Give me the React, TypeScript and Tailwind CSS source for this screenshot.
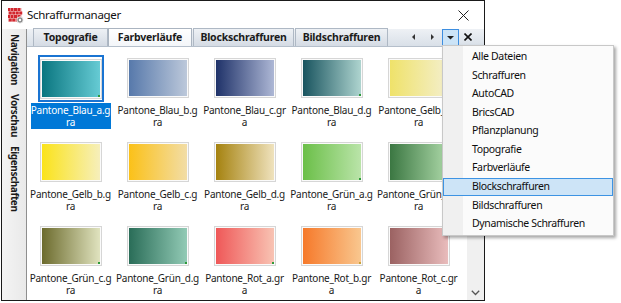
import React from "react";

type Item = { c1: string; c2: string; l1: string; l2: string; sel?: boolean; dot?: string };

const items: Item[] = [
  { c1: "#0a7680", c2: "#66cbd4", l1: "Pantone_Blau_a.g", l2: "ra", sel: true, dot: "#2e9a3a" },
  { c1: "#5779ab", c2: "#bcc8da", l1: "Pantone_Blau_b.g", l2: "ra" },
  { c1: "#1f3269", c2: "#adb7d5", l1: "Pantone_Blau_c.gr", l2: "a" },
  { c1: "#19545f", c2: "#aed4cf", l1: "Pantone_Blau_d.g", l2: "ra", dot: "#2e9a3a" },
  { c1: "#efe26a", c2: "#f4efcc", l1: "Pantone_Gelb_a.g", l2: "ra" },
  { c1: "#fbe31a", c2: "#f6efbb", l1: "Pantone_Gelb_b.g", l2: "ra" },
  { c1: "#fbc118", c2: "#f2dda6", l1: "Pantone_Gelb_c.g", l2: "ra" },
  { c1: "#a5820f", c2: "#efe2bd", l1: "Pantone_Gelb_d.g", l2: "ra" },
  { c1: "#6bbf48", c2: "#bae4a9", l1: "Pantone_Grün_a.g", l2: "ra", dot: "#2e9a3a" },
  { c1: "#3b7742", c2: "#acd8a8", l1: "Pantone_Grün_b.g", l2: "ra" },
  { c1: "#6c6b2d", c2: "#e0e3bf", l1: "Pantone_Grün_c.g", l2: "ra", dot: "#2e9a3a" },
  { c1: "#2a6d58", c2: "#92cab5", l1: "Pantone_Grün_d.g", l2: "ra", dot: "#2e9a3a" },
  { c1: "#ef5858", c2: "#f8c3b3", l1: "Pantone_Rot_a.gr", l2: "a", dot: "#2e9a3a" },
  { c1: "#f6792a", c2: "#f9c78f", l1: "Pantone_Rot_b.gr", l2: "a", dot: "#c9a23a" },
  { c1: "#9b6262", c2: "#e9bcbc", l1: "Pantone_Rot_c.gr", l2: "a" },
];

const menu = [
  "Alle Dateien",
  "Schraffuren",
  "AutoCAD",
  "BricsCAD",
  "Pflanzplanung",
  "Topografie",
  "Farbverläufe",
  "Blockschraffuren",
  "Bildschraffuren",
  "Dynamische Schraffuren",
];

function AppIcon() {
  const cells: React.ReactElement[] = [];
  for (let r = 0; r < 4; r++) {
    for (let c = 0; c < 4; c++) {
      const off = r % 2 === 0 ? 0 : 1.75;
      cells.push(
        <rect key={`${r}-${c}`} x={c * 3.5 + off - 1} y={r * 3.5} width={3} height={3} fill="#d2262e" />
      );
    }
  }
  return (
    <svg width="16" height="16" viewBox="0 0 16 16">
      <rect x="0" y="0" width="14" height="14" fill="#f6d2d2" />
      {cells}
      <circle cx="12" cy="12" r="3.2" fill="#8a8a8a" stroke="#ffffff" strokeWidth="0.8" />
      <circle cx="12" cy="12" r="1.2" fill="#ffffff" />
    </svg>
  );
}

function Tab({ label, w, selected, ml }: { label: string; w: string; selected?: boolean; ml: string }) {
  return (
    <div
      className={`${w} ${ml} h-[18px] flex items-center justify-center border border-b-0 text-[10.5px] tracking-[-0.2px] font-bold text-[#1b1b1b] ${
        selected
          ? "bg-gradient-to-b from-[#ffffff] to-[#f3f6f9] border-[#aab4c0]"
          : "bg-gradient-to-b from-[#eef1f5] to-[#d4dbe4] border-[#aeb8c4]"
      }`}
    >
      {label}
    </div>
  );
}

export default function App() {
  return (
    <div className="w-[621px] h-[303px] bg-white relative overflow-hidden font-['Noto_Sans',sans-serif] text-[#1a1a1a]">
      <div className="ml-[1px] w-[484px] h-[301px] border border-[#1a1a1a] flex flex-col bg-[#f0f0f0]">
        {/* Title bar */}
        <div className="h-[28px] bg-white flex items-center shrink-0">
          <div className="ml-[6px] mt-[1px] w-[16px] h-[16px]">
            <AppIcon />
          </div>
          <div className="ml-[3px] text-[11.5px] tracking-[-0.3px] text-[#111]">Schraffurmanager</div>
          <div className="ml-auto mr-[15px] w-[12px] h-[12px] flex items-center justify-center">
            <svg width="11" height="11" viewBox="0 0 11 11">
              <path d="M0.5 0.5 L10.5 10.5 M10.5 0.5 L0.5 10.5" stroke="#222" strokeWidth="1" />
            </svg>
          </div>
        </div>
        {/* Body */}
        <div className="flex-1 flex min-h-0">
          {/* vertical tabs */}
          <div className="w-[24px] shrink-0 flex flex-col pt-[2px] bg-gradient-to-r from-[#f4f4f4] to-[#e9e9e9]">
            <div className="h-[58px] flex items-center justify-center">
              <span className="[writing-mode:vertical-rl] text-[10px] font-bold tracking-[-0.4px]">Navigation</span>
            </div>
            <div className="h-[52px] flex items-center justify-center">
              <span className="[writing-mode:vertical-rl] text-[10px] font-bold tracking-[-0.4px]">Vorschau</span>
            </div>
            <div className="h-[75px] flex items-center justify-center">
              <span className="[writing-mode:vertical-rl] text-[10px] font-bold tracking-[-0.4px]">Eigenschaften</span>
            </div>
          </div>
          {/* main */}
          <div className="flex-1 flex flex-col min-w-0 border-l border-[#8e8e8e]">
            {/* tab bar */}
            <div className="h-[18px] shrink-0 flex items-end bg-gradient-to-b from-[#eef1f5] to-[#d9e0e8] border-b border-[#b5bfcb]">
              <Tab label="Topografie" w="w-[75px]" ml="ml-[6px]" />
              <Tab label="Farbverläufe" w="w-[84px]" ml="ml-[0px]" selected />
              <Tab label="Blockschraffuren" w="w-[101px]" ml="ml-[1px]" />
              <Tab label="Bildschraffuren" w="w-[93px]" ml="ml-[1px]" />
              <div className="ml-auto flex items-center h-[18px]">
                <div className="w-[16px] h-[16px] flex items-center justify-center">
                  <svg width="4" height="6" viewBox="0 0 4 6">
                    <path d="M3 0 L0 3 L3 6 Z" fill="#333" />
                  </svg>
                </div>
                <div className="ml-[2px] w-[16px] h-[16px] flex items-center justify-center">
                  <svg width="4" height="6" viewBox="0 0 4 6">
                    <path d="M1 0 L4 3 L1 6 Z" fill="#333" />
                  </svg>
                </div>
                <div className="ml-[2px] w-[17px] h-[17px] flex items-center justify-center bg-[#cce4f7] border border-[#3d8ee0]">
                  <svg width="7" height="5" viewBox="0 0 7 5">
                    <path d="M0 1 L7 1 L3.5 4.5 Z" fill="#222" />
                  </svg>
                </div>
                <div className="w-[18px] h-[16px] flex items-center justify-center mr-[7px]">
                  <svg width="8" height="8" viewBox="0 0 8 8">
                    <path d="M0.5 0.5 L7.5 7.5 M7.5 0.5 L0.5 7.5" stroke="#111" strokeWidth="1.6" />
                  </svg>
                </div>
              </div>
            </div>
            {/* content */}
            <div className="flex-1 flex min-h-0 bg-white">
              <div className="flex-1 min-w-0 overflow-hidden">
                <div className="grid grid-cols-[repeat(5,87px)]">
                  {items.map((it, i) => (
                    <div key={i} className="h-[84px] flex flex-col items-center pt-[11px]">
                      <div
                        className={`relative flex items-center justify-center ${
                          it.sel ? "w-[66px] h-[47px] border-2 border-[#1a74d2] -mt-[3px] mb-[-4px]" : "w-[62px] h-[40px]"
                        }`}
                      >
                        <div className="w-[62px] h-[40px] border border-[#d6d6d6] bg-[#fafafa] p-[1px] relative">
                          <div
                            className="w-full h-full"
                            style={{ background: `linear-gradient(to right, ${it.c1}, ${it.c2})` }}
                          />
                          {it.dot && (
                            <div
                              className="absolute right-[1px] bottom-[1px] w-[2px] h-[2px]"
                              style={{ background: it.dot }}
                            />
                          )}
                        </div>
                      </div>
                      <div
                        className={`mt-[5px] w-[80px] flex flex-col items-center text-[10px] leading-[12px] tracking-[-0.25px] pt-[1px] pb-[1px] ${
                          it.sel ? "bg-[#0078d7] text-white" : "text-[#1a1a1a]"
                        }`}
                      >
                        <span className="whitespace-nowrap">{it.l1}</span>
                        <span className="whitespace-nowrap">{it.l2}</span>
                      </div>
                    </div>
                  ))}
                </div>
              </div>
              {/* scrollbar */}
              <div className="w-[17px] shrink-0 bg-[#f0f0f0] flex flex-col justify-end items-center pb-[4px]">
                <svg width="9" height="6" viewBox="0 0 9 6">
                  <path d="M0.8 0.8 L4.5 4.5 L8.2 0.8" stroke="#555" strokeWidth="1.3" fill="none" />
                </svg>
              </div>
            </div>
          </div>
        </div>
      </div>

      {/* dropdown menu */}
      <div className="absolute left-[442px] top-[45px] w-[172px] border border-[#c8c8c8] bg-[#fbfbfb] shadow-[2px_2px_3px_rgba(0,0,0,0.35)] py-[1.5px] flex">
        <div className="absolute left-0 top-0 bottom-0 w-[20px] bg-[#f0f0f0]" />
        <div className="flex flex-col w-full relative">
          {menu.map((m) => (
            <div
              key={m}
              className={`h-[18.6px] flex items-center pl-[29px] text-[10.5px] tracking-[-0.35px] text-[#0e0e0e] ${
                m === "Blockschraffuren" ? "bg-[#cde4f7] outline outline-1 outline-[#3d93e3] -outline-offset-1" : ""
              }`}
            >
              {m}
            </div>
          ))}
        </div>
      </div>
    </div>
  );
}
